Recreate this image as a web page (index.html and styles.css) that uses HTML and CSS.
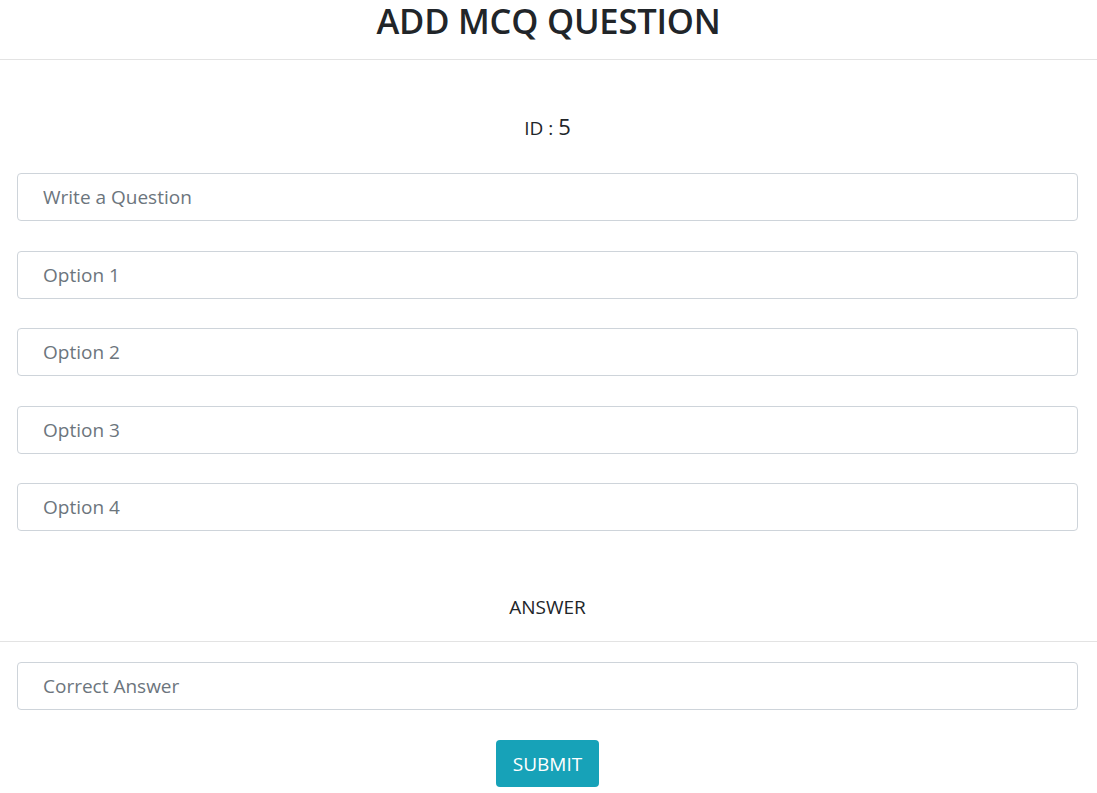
FILE: index.html
```html
<!DOCTYPE html>
<html>
<head>
<meta charset="utf-8">
<link rel="stylesheet" href="styles.css">
</head>
<body>
<header class="header">
  <h1 class="title">ADD MCQ QUESTION</h1>
</header>
<main class="form">
  <div class="id-line">ID : <span class="id-num">5</span></div>
  <input class="field" type="text" placeholder="Write a Question">
  <input class="field" type="text" placeholder="Option 1">
  <input class="field" type="text" placeholder="Option 2">
  <input class="field" type="text" placeholder="Option 3">
  <input class="field" type="text" placeholder="Option 4">
  <div class="answer-label">ANSWER</div>
  <div class="answer-rule"></div>
  <input class="field field-answer" type="text" placeholder="Correct Answer">
  <div class="actions">
    <button class="submit" type="button">SUBMIT</button>
  </div>
</main>
</body>
</html>
```

FILE: styles.css
```css
* { box-sizing: border-box; }
html, body { margin: 0; padding: 0; background: #fff; }
body {
  font-family: "Open Sans", "Noto Sans", sans-serif;
  color: #212529;
}
.header {
  border-bottom: 1px solid #e3e3e3;
  height: 60px;
  display: flex;
  justify-content: center;
}
.title {
  margin: 0;
  padding-top: 2px;
  font-size: 34.5px;
  font-weight: 600;
  line-height: 38px;
  letter-spacing: -0.2px;
}
.form {
  display: flex;
  flex-direction: column;
  padding: 0 19px 0 17px;
}
.id-line {
  text-align: center;
  font-size: 19px;
  margin-top: 51px;
  height: 30px;
  line-height: 30px;
}
.id-num { font-size: 22px; }
.field {
  display: block;
  width: 100%;
  height: 48px;
  margin-top: 29.5px;
  padding: 0 25px;
  font-family: inherit;
  font-size: 19px;
  color: #495057;
  border: 1px solid #ced4da;
  border-radius: 4px;
  background: #fff;
  outline: none;
}
.id-line + .field { margin-top: 32px; }
.field::placeholder { color: #6c757d; }
.answer-label {
  text-align: center;
  font-size: 19px;
  margin-top: 61px;
  line-height: 30px;
}
.answer-rule {
  border-top: 1px solid #e3e3e3;
  margin: 19px -19px 0 -17px;
}
.field-answer { margin-top: 20px; }
.actions {
  display: flex;
  justify-content: center;
  margin-top: 30px;
}
.submit {
  background: #17a2b8;
  color: #fff;
  border: none;
  border-radius: 4px;
  height: 47px;
  width: 103px;
  font-family: inherit;
  font-size: 19px;
  padding: 0;
}
```
